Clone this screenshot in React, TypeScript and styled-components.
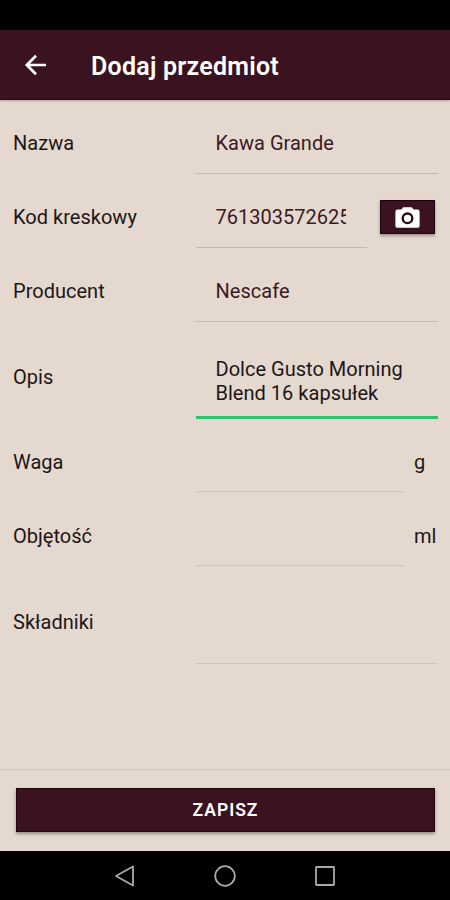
import React from "react";
import styled, { createGlobalStyle } from "styled-components";

const GlobalStyle = createGlobalStyle`
  * { box-sizing: border-box; }
  body { margin: 0; background: #000; }
`;

const Screen = styled.div`
  width: 450px;
  height: 900px;
  display: flex;
  flex-direction: column;
  overflow: hidden;
  background: #e5d8cf;
  color: #1c1717;
  font-family: Roboto, "Liberation Sans", sans-serif;
  font-size: 20px;
`;

const StatusBar = styled.div`
  height: 30px;
  flex: none;
  background: #000;
`;

const Header = styled.header`
  height: 70px;
  flex: none;
  display: flex;
  align-items: center;
  gap: 42px;
  padding: 1px 0 0 23px;
  background: #3b1320;
  color: #fff;
  border-bottom: 1px solid #2c0d17;
  box-shadow: 0 1px 2px rgba(60, 30, 30, 0.3);
`;

const Title = styled.h1`
  margin: 3px 0 0;
  font-size: 25px;
  font-weight: 600;
  line-height: 30px;
  letter-spacing: 0.24px;
`;

const Form = styled.main`
  flex: 1;
`;

const Row = styled.div<{ $height: number }>`
  height: ${(p) => p.$height}px;
  display: flex;
  padding: 0 12px 0 13px;
`;

const Label = styled.label<{ $raised?: boolean }>`
  width: 182px;
  flex: none;
  align-self: center;
  padding-top: ${(p) => (p.$raised ? 11 : 13)}px;
  line-height: 24px;
  letter-spacing: 0.02px;
`;

const Field = styled.div<{ $focused?: boolean; $faint?: boolean; $inset?: number }>`
  flex: 1;
  min-width: 0;
  display: flex;
  align-items: center;
  padding: ${(p) => (p.$focused ? 24 : 13)}px 21px 0 ${(p) => 20.5 - (p.$inset ?? 1)}px;
  margin-left: ${(p) => p.$inset ?? 1}px;
  border-bottom: ${(p) =>
    p.$focused ? "3px solid #2fc26d" : `1px solid ${p.$faint ? "#d1c3bc" : "#c5b8b2"}`};
`;

const Value = styled.span<{ $dark?: boolean }>`
  overflow: hidden;
  white-space: pre;
  line-height: 24px;
  letter-spacing: 0.02px;
  color: ${(p) => (p.$dark ? "#1c1717" : "#3b1a23")};
`;

const Unit = styled.span`
  width: 24px;
  margin-left: 10px;
  flex: none;
  align-self: center;
  padding-top: 13px;
  line-height: 24px;
`;

const ScanButton = styled.button`
  width: 55px;
  height: 34px;
  flex: none;
  margin: 26px 3px 0 13px;
  padding: 0;
  display: flex;
  align-items: center;
  justify-content: center;
  border: 1px solid #1b050c;
  background: #3b1320;
  color: #fff;
  box-shadow: 0 2px 3px rgba(40, 20, 20, 0.35);
`;

const Footer = styled.footer`
  height: 82px;
  flex: none;
  padding: 18px 15px 0 16px;
  border-top: 1px solid #d3c5bd;
`;

const SaveButton = styled.button`
  width: 100%;
  height: 44px;
  border: 1px solid #23070f;
  background: #3b1320;
  color: #fff;
  font: 600 17.5px/22px Roboto, "Liberation Sans", sans-serif;
  letter-spacing: 1px;
  box-shadow: 0 2px 3px rgba(40, 20, 20, 0.4);
`;

const NavBar = styled.nav`
  height: 49px;
  flex: none;
  display: flex;
  justify-content: center;
  align-items: center;
  gap: 76px;
  background: #000;
`;

const NavIcon = styled.svg`
  width: 24px;
  height: 24px;
  fill: none;
  stroke: #a9a9a9;
  stroke-width: 1.8;
  stroke-linejoin: round;
`;

const BackArrow = () => (
  <svg width="26" height="26" viewBox="0 0 26 26" fill="none" stroke="#fff" strokeWidth="2.7">
    <path d="M23 13H4.5M13 3.7 3.8 13l9.2 9.3" />
  </svg>
);

const Camera = () => (
  <svg width="25" height="23" viewBox="0 0 25 23">
    <path
      fill="#fff"
      d="M8.3 1.2h8.4l2 2.3h3.7c1.3 0 2.2.9 2.2 2.2v14c0 1.3-.9 2.1-2.2 2.1H2.6C1.3 21.8.4 21 .4 19.7v-14c0-1.3.9-2.2 2.2-2.2h3.7z"
    />
    <circle cx="12.5" cy="12.3" r="4.8" fill="#fff" stroke="#2a0b15" strokeWidth="2.3" />
  </svg>
);

export default function App() {
  return (
    <>
      <GlobalStyle />
      <Screen>
        <StatusBar />
        <Header>
          <BackArrow />
          <Title>Dodaj przedmiot</Title>
        </Header>
        <Form>
          <Row $height={74}>
            <Label $raised>Nazwa</Label>
            <Field $inset={0}>
              <Value>Kawa Grande</Value>
            </Field>
          </Row>
          <Row $height={74}>
            <Label $raised>Kod kreskowy</Label>
            <Field>
              <Value>761303572625</Value>
            </Field>
            <ScanButton aria-label="Skanuj">
              <Camera />
            </ScanButton>
          </Row>
          <Row $height={74}>
            <Label $raised>Producent</Label>
            <Field $inset={0}>
              <Value>Nescafe</Value>
            </Field>
          </Row>
          <Row $height={97}>
            <Label>Opis</Label>
            <Field $focused>
              <Value $dark>{"Dolce Gusto Morning\nBlend 16 kapsułek"}</Value>
            </Field>
          </Row>
          <Row $height={73}>
            <Label>Waga</Label>
            <Field $faint />
            <Unit>g</Unit>
          </Row>
          <Row $height={74}>
            <Label>Objętość</Label>
            <Field $faint />
            <Unit>ml</Unit>
          </Row>
          <Row $height={98}>
            <Label>Składniki</Label>
            <Field $faint />
          </Row>
        </Form>
        <Footer>
          <SaveButton>ZAPISZ</SaveButton>
        </Footer>
        <NavBar>
          <NavIcon viewBox="0 0 24 24">
            <path d="M20 2.5v19L3 12z" />
          </NavIcon>
          <NavIcon viewBox="0 0 24 24">
            <circle cx="12" cy="12" r="9.8" />
          </NavIcon>
          <NavIcon viewBox="0 0 24 24">
            <rect x="3" y="3" width="18" height="18" rx="0.5" />
          </NavIcon>
        </NavBar>
      </Screen>
    </>
  );
}
